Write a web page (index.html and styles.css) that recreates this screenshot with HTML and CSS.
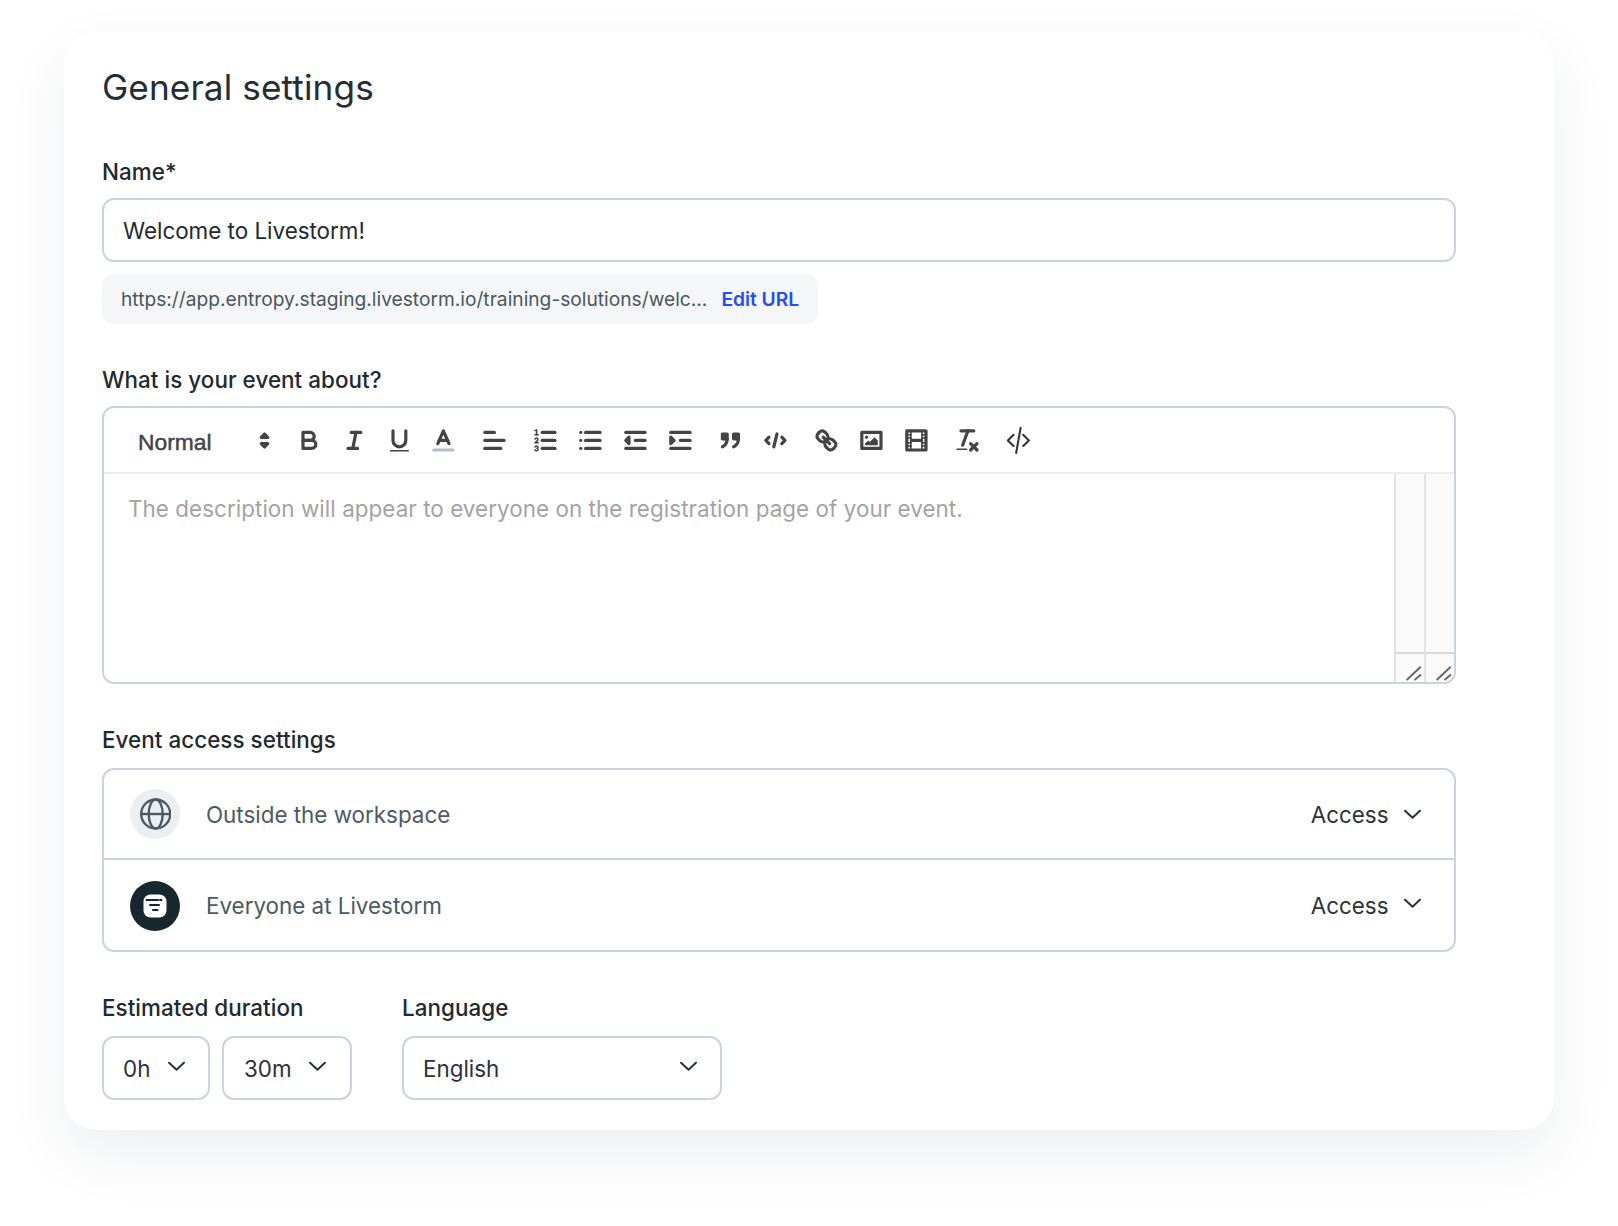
FILE: index.html
```html
<!DOCTYPE html>
<html lang="en">
<head>
<meta charset="utf-8">
<title>General settings</title>
<link rel="stylesheet" href="styles.css">
</head>
<body>
<main class="card">
  <h1 class="title">General settings</h1>

  <section class="field field-name">
    <label class="label">Name*</label>
    <div class="input">Welcome to Livestorm!</div>
    <div class="url">
      <span class="url-text">https://app.entropy.staging.livestorm.io/training-solutions/welc...</span>
      <a class="url-edit">Edit URL</a>
    </div>
  </section>

  <section class="field field-about">
    <label class="label">What is your event about?</label>
    <div class="editor">
      <div class="toolbar">
        <div class="picker">
          <span class="picker-label">Normal</span>
          <svg class="picker-arrows" viewBox="0 0 18 18"><polygon points="7 11 9 13 11 11 7 11"/><polygon points="7 7 9 5 11 7 7 7"/></svg>
        </div>
        <div class="group">
          <button class="tool"><svg viewBox="0 0 18 18"><path d="M5,4H9.5A2.5,2.5,0,0,1,12,6.5v0A2.5,2.5,0,0,1,9.5,9H5A0,0,0,0,1,5,9V4A0,0,0,0,1,5,4Z"/><path d="M5,9h5.5A2.5,2.5,0,0,1,13,11.5v0A2.5,2.5,0,0,1,10.5,14H5a0,0,0,0,1,0,0V9A0,0,0,0,1,5,9Z"/></svg></button>
          <button class="tool"><svg viewBox="0 0 18 18"><line x1="7" x2="13" y1="4" y2="4"/><line x1="5" x2="11" y1="14" y2="14"/><line x1="8" x2="10" y1="14" y2="4"/></svg></button>
          <button class="tool"><svg viewBox="0 0 18 18"><path d="M5,3V9a4.012,4.012,0,0,0,4,4H9a4.012,4.012,0,0,0,4-4V3"/><rect class="fill" height="1" rx=".5" ry=".5" width="12" x="3" y="15"/></svg></button>
          <button class="tool"><svg viewBox="0 0 18 18"><line class="color-line" x1="3" x2="15" y1="15" y2="15"/><polyline points="5.5 11 9 3 12.5 11"/><line x1="11.63" x2="6.38" y1="9" y2="9"/></svg></button>
        </div>
        <div class="group">
          <button class="tool"><svg viewBox="0 0 18 18"><line x1="3" x2="15" y1="9" y2="9"/><line x1="3" x2="13" y1="14" y2="14"/><line x1="3" x2="9" y1="4" y2="4"/></svg></button>
        </div>
        <div class="group">
          <button class="tool"><svg viewBox="0 0 18 18"><line x1="7" x2="15" y1="4" y2="4"/><line x1="7" x2="15" y1="9" y2="9"/><line x1="7" x2="15" y1="14" y2="14"/><line class="thin" x1="2.5" x2="4.5" y1="5.5" y2="5.5"/><path class="fill" d="M3.5,6A0.5,0.5,0,0,1,3,5.5V3.085l-0.276.138A0.5,0.5,0,0,1,2.053,3c-0.124-.247-0.023-0.324.224-0.447l1-.5A0.5,0.5,0,0,1,4,2.5v3A0.5,0.5,0,0,1,3.5,6Z"/><path class="thin" d="M4.5,10.5h-2c0-.234,1.85-1.076,1.85-2.234A0.959,0.959,0,0,0,2.5,8.156"/><path class="thin" d="M2.5,14.846a0.959,0.959,0,0,0,1.85-.109A0.7,0.7,0,0,0,3.75,14a0.688,0.688,0,0,0,.6-0.736,0.959,0.959,0,0,0-1.85-.109"/></svg></button>
          <button class="tool"><svg viewBox="0 0 18 18"><line x1="6" x2="15" y1="4" y2="4"/><line x1="6" x2="15" y1="9" y2="9"/><line x1="6" x2="15" y1="14" y2="14"/><line x1="3" x2="3" y1="4" y2="4"/><line x1="3" x2="3" y1="9" y2="9"/><line x1="3" x2="3" y1="14" y2="14"/></svg></button>
          <button class="tool"><svg viewBox="0 0 18 18"><line x1="3" x2="15" y1="14" y2="14"/><line x1="3" x2="15" y1="4" y2="4"/><line x1="9" x2="15" y1="9" y2="9"/><polyline class="solid" points="5 7 5 11 3 9 5 7"/></svg></button>
          <button class="tool"><svg viewBox="0 0 18 18"><line x1="3" x2="15" y1="14" y2="14"/><line x1="3" x2="15" y1="4" y2="4"/><line x1="9" x2="15" y1="9" y2="9"/><polyline class="solid" points="3 7 3 11 5 9 3 7"/></svg></button>
        </div>
        <div class="group">
          <button class="tool"><svg viewBox="0 0 18 18"><rect class="solid" height="3" width="3" x="4" y="5"/><rect class="solid" height="3" width="3" x="11" y="5"/><path d="M7,8c0,4.031-3,5-3,5"/><path d="M14,8c0,4.031-3,5-3,5"/></svg></button>
          <button class="tool"><svg viewBox="0 0 18 18"><polyline points="5 7 3 9 5 11"/><polyline points="13 7 15 9 13 11"/><line x1="10" x2="8" y1="5" y2="13"/></svg></button>
        </div>
        <div class="group">
          <button class="tool"><svg viewBox="0 0 18 18"><line x1="7" x2="11" y1="7" y2="11"/><path d="M8.9,4.577a3.476,3.476,0,0,1,.36,4.679A3.476,3.476,0,0,1,4.577,8.9C3.185,7.5,2.035,6.4,4.217,4.217S7.5,3.185,8.9,4.577Z"/><path d="M13.423,9.1a3.476,3.476,0,0,0-4.679-.36,3.476,3.476,0,0,0,.36,4.679c1.392,1.392,2.5,2.542,4.679.36S14.815,10.5,13.423,9.1Z"/></svg></button>
          <button class="tool"><svg viewBox="0 0 18 18"><rect height="10" width="12" x="3" y="4"/><circle class="fill" cx="6" cy="7" r="1"/><polyline class="fill" points="5 12 5 11 7 9 8 10 11 7 13 9 13 12 5 12"/></svg></button>
          <button class="tool"><svg viewBox="0 0 18 18"><rect height="12" width="12" x="3" y="3"/><rect class="fill" height="12" width="1" x="5" y="3"/><rect class="fill" height="12" width="1" x="12" y="3"/><rect class="fill" height="2" width="8" x="5" y="8"/><rect class="fill" height="1" width="3" x="3" y="5"/><rect class="fill" height="1" width="3" x="3" y="7"/><rect class="fill" height="1" width="3" x="3" y="10"/><rect class="fill" height="1" width="3" x="3" y="12"/><rect class="fill" height="1" width="3" x="12" y="5"/><rect class="fill" height="1" width="3" x="12" y="7"/><rect class="fill" height="1" width="3" x="12" y="10"/><rect class="fill" height="1" width="3" x="12" y="12"/></svg></button>
        </div>
        <div class="group">
          <button class="tool"><svg viewBox="0 0 18 18"><line x1="5" x2="13" y1="3" y2="3"/><line x1="6" x2="9.35" y1="12" y2="3"/><line x1="11" x2="15" y1="11" y2="15"/><line x1="15" x2="11" y1="11" y2="15"/><rect class="fill" height="1" rx=".5" ry=".5" width="7" x="2" y="14"/></svg></button>
        </div>
        <div class="group">
          <button class="tool"><svg class="html-icon" viewBox="0 0 18 18"><polyline points="6 5.5 2.4 9 6 12.5"/><polyline points="12 5.5 15.6 9 12 12.5"/><line x1="10.4" x2="7.6" y1="1.2" y2="16.8"/></svg></button>
        </div>
      </div>
      <div class="editor-body">
        <div class="placeholder">The description will appear to everyone on the registration page of your event.</div>
        <div class="scroll-col">
          <div class="scroll-track"></div>
          <div class="scroll-corner"><svg viewBox="0 0 28 28"><path d="M10.7 26 L24.7 12.7 M18.5 26 L25 20.5"/></svg></div>
        </div>
        <div class="scroll-col">
          <div class="scroll-track"></div>
          <div class="scroll-corner"><svg viewBox="0 0 28 28"><path d="M10.7 26 L24.7 12.7 M18.5 26 L25 20.5"/></svg></div>
        </div>
      </div>
    </div>
  </section>

  <section class="field field-access">
    <label class="label">Event access settings</label>
    <div class="access">
      <div class="access-row access-row-first">
        <span class="avatar avatar-globe"><svg viewBox="-0.7 0 32 32"><circle cx="16" cy="16" r="14.5"/><ellipse cx="16" cy="16" rx="7" ry="14.5"/><line x1="1.5" x2="30.5" y1="16" y2="16"/></svg></span>
        <span class="access-name">Outside the workspace</span>
        <span class="access-value">Access</span>
        <svg class="chev" viewBox="0 0 16 10"><polyline points="1 1.5 8 8 15 1.5"/></svg>
      </div>
      <div class="access-row access-row-second">
        <span class="avatar avatar-brand"><svg viewBox="0 0 24 24"><rect class="logo-bg" x="0.5" y="0.5" width="23" height="23" rx="7"/><path class="logo-mark" d="M3.5 6H15M17 6H18.5M7 11H16M10 16H14.5"/></svg></span>
        <span class="access-name">Everyone at Livestorm</span>
        <span class="access-value">Access</span>
        <svg class="chev chev-up" viewBox="0 0 16 10"><polyline points="1 1.5 8 8 15 1.5"/></svg>
      </div>
    </div>
  </section>

  <section class="bottom">
    <div class="bottom-col">
      <label class="label">Estimated duration</label>
      <div class="select-row">
        <div class="select select-h"><span>0h</span><svg class="chev" viewBox="0 0 16 10"><polyline points="1 1.5 8 8 15 1.5"/></svg></div>
        <div class="select select-m"><span>30m</span><svg class="chev" viewBox="0 0 16 10"><polyline points="1 1.5 8 8 15 1.5"/></svg></div>
      </div>
    </div>
    <div class="bottom-col">
      <label class="label">Language</label>
      <div class="select-row">
        <div class="select select-lang"><span>English</span><svg class="chev" viewBox="0 0 16 10"><polyline points="1 1.5 8 8 15 1.5"/></svg></div>
      </div>
    </div>
  </section>
</main>
</body>
</html>
```
FILE: styles.css
```css
* { box-sizing: border-box; }
html, body { margin: 0; padding: 0; background: #fff; }
body {
  width: 1618px;
  height: 1226px;
  overflow: hidden;
  padding: 32px 0 0 64px;
  font-family: Inter, "Liberation Sans", sans-serif;
  color: #1f2a30;
}
.card {
  width: 1490px;
  height: 1098px;
  background: #fff;
  border-radius: 32px;
  padding: 31px 38px 0;
  box-shadow: 0 24px 60px rgba(30, 50, 65, 0.08);
}
.title {
  margin: 0;
  font-size: 35.2px;
  letter-spacing: 0.1px;
  line-height: 48px;
  font-weight: 400;
  color: #242d33;
}
.label {
  display: block;
  font-size: 22.4px;
  letter-spacing: 0.05px;
  line-height: 30px;
  font-weight: 500;
  color: #20292f;
}
.field-name { margin-top: 46px; }
.input {
  margin-top: 11px;
  width: 1354px;
  height: 64px;
  border: 2px solid #c9d4df;
  border-radius: 12px;
  padding: 0 19px;
  display: flex;
  align-items: center;
  font-size: 22.4px;
  color: #1f2a30;
}
.url {
  margin-top: 12px;
  width: 716px;
  height: 50px;
  background: #f5f6f8;
  border-radius: 12px;
  padding: 0 19px;
  display: flex;
  align-items: center;
  gap: 14px;
  white-space: nowrap;
}
.url-text { font-size: 19.2px; color: #4a5761; }
.url-edit { font-size: 19.2px; font-weight: 600; color: #1f4dff; }
.field-about { margin-top: 41px; }
.editor {
  margin-top: 11px;
  width: 1354px;
  height: 278px;
  border: 2px solid #c9d4df;
  border-radius: 12px;
  overflow: hidden;
  display: flex;
  flex-direction: column;
}
.toolbar {
  height: 66px;
  flex: none;
  border-bottom: 2px solid #e8edf1;
  display: flex;
  align-items: center;
  padding: 0 0 0 34px;
}
.picker {
  width: 149px;
  display: flex;
  align-items: center;
  justify-content: space-between;
  padding-right: 8px;
}
.picker-label {
  font-family: "Liberation Sans", Arial, sans-serif;
  font-size: 22.8px;
  color: #444;
  -webkit-text-stroke: 0.45px #444;
  position: relative;
  top: 2px;
}
.picker-arrows { width: 29px; height: 29px; }
.picker-arrows polygon { fill: #444; stroke: #444; stroke-width: 2; stroke-linejoin: round; }
.group { display: flex; margin-right: 6.1px; }
.tool {
  width: 44.8px;
  height: 38px;
  padding: 0 8px;
  border: 0;
  background: none;
  display: flex;
  align-items: center;
  justify-content: center;
}
.tool svg { width: 28.8px; height: 28.8px; flex: none; overflow: visible; }
.tool svg * { fill: none; stroke: #444; stroke-width: 2; stroke-linecap: round; stroke-linejoin: round; }
.tool svg .fill { fill: #444; stroke: none; }
.tool svg .solid { fill: #444; }
.tool svg .thin { stroke-width: 1; }
.tool svg .color-line { stroke: #b5bcc2; }
.tool svg.html-icon * { stroke-width: 1.3; stroke: #333; }
.editor-body { flex: 1; display: flex; min-height: 0; }
.placeholder {
  flex: 1;
  padding: 20px 24px;
  font-size: 22.4px;
  letter-spacing: 0.06px;
  line-height: 30px;
  color: #a3a3a3;
}
.scroll-col {
  width: 30px;
  flex: none;
  display: flex;
  flex-direction: column;
  background: #fafafa;
  border-left: 2px solid #e3e3e3;
}
.scroll-track { flex: 1; }
.scroll-corner { height: 30px; border-top: 2px solid #d8d8d8; }
.scroll-corner svg { display: block; width: 100%; height: 100%; }
.scroll-corner path { fill: none; stroke: #6a6a6a; stroke-width: 2; }
.field-access { margin-top: 41px; }
.access {
  margin-top: 13px;
  width: 1354px;
  height: 184px;
  border: 2px solid #c9d4df;
  border-radius: 12px;
  display: flex;
  flex-direction: column;
}
.access-row {
  flex: 1;
  display: flex;
  align-items: center;
  padding: 0 33px 0 26px;
  font-size: 22.4px;
}
.access-row-first { border-bottom: 2px solid #c9d4df; flex: none; height: 90px; }
.access-row-second { padding-top: 1px; }
.avatar {
  width: 50px;
  height: 50px;
  border-radius: 50%;
  display: flex;
  align-items: center;
  justify-content: center;
  flex: none;
}
.avatar-globe { background: #ebeff2; }
.avatar-globe svg { width: 32px; height: 32px; }
.avatar-globe svg * { fill: none; stroke: #4c5a65; stroke-width: 2.4; }
.avatar-brand { background: #17272e; }
.avatar-brand svg { width: 24px; height: 24px; }
.logo-bg { fill: #fff; }
.logo-mark { fill: none; stroke: #17272e; stroke-width: 2; stroke-linecap: round; }
.access-name { margin-left: 26px; flex: 1; color: #4c5a65; }
.access-value { color: #2a3339; }
.chev { width: 17px; height: 11px; flex: none; }
.chev polyline { fill: none; stroke: #2a3339; stroke-width: 1.9; stroke-linecap: round; stroke-linejoin: round; }
.access-value + .chev { margin-left: 15.5px; }
.chev-up { margin-top: -4px; }
.bottom { display: flex; margin-top: 41px; gap: 50px; }
.select-row { display: flex; gap: 12px; margin-top: 13px; }
.select {
  height: 64px;
  border: 2px solid #c9d4df;
  border-radius: 12px;
  display: flex;
  align-items: center;
  justify-content: space-between;
  padding: 0 23px 0 19px;
  font-size: 22.4px;
  color: #2a3339;
}
.select .chev { margin-top: -4px; }
.select-h { width: 108px; }
.select-m { width: 130px; padding-right: 24px; padding-left: 20px; }
.select-lang { width: 320px; }
```
